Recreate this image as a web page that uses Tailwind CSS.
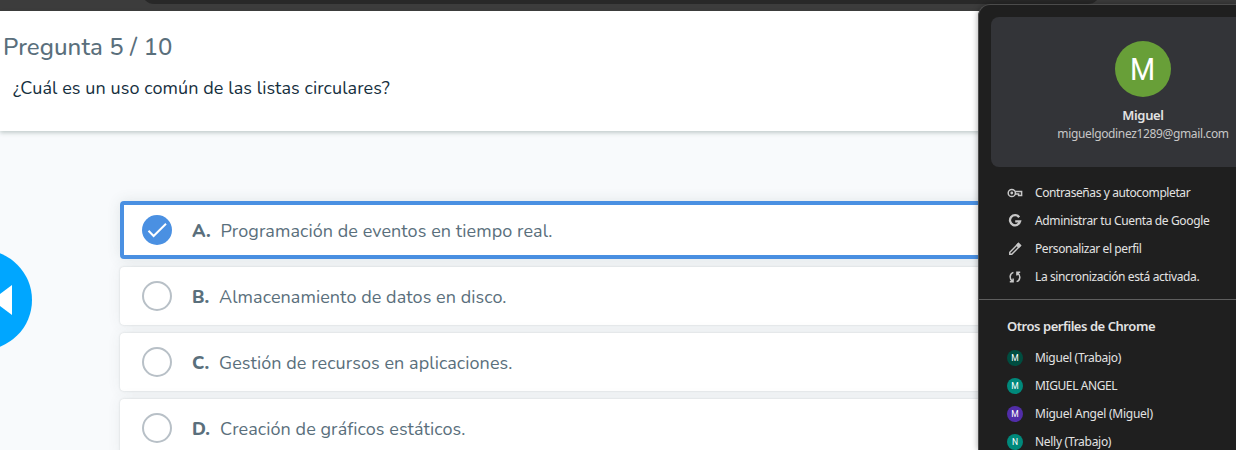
<!DOCTYPE html>
<html lang="es">
<head>
<meta charset="utf-8">
<title>Pregunta 5 / 10</title>
<script src="https://cdn.jsdelivr.net/npm/@tailwindcss/browser@4"></script>
</head>
<body class="relative flex h-[450px] w-[1236px] flex-col overflow-hidden bg-[#f8fafc] font-['Nunito',Lato,sans-serif] text-[#5a6f7c]">
  <div class="h-[11px] w-full shrink-0 overflow-hidden bg-[#3c3c3c] pl-[142px]">
    <div class="-mt-[20px] h-6 w-[958px] rounded-b-[12px] bg-[#282828]"></div>
  </div>
  <header class="relative z-10 h-[120px] shrink-0 bg-white shadow-[0_2px_4px_rgba(40,70,65,0.25)]">
    <h1 class="pt-[20px] pl-[3px] text-[24px] leading-[32px] font-medium whitespace-nowrap tracking-[0.08px]">Pregunta 5 / 10</h1>
    <p class="pt-[12px] pl-[13px] text-[18px] leading-[26px] whitespace-nowrap tracking-[0.08px] text-[#162f3e]">¿Cuál es un uso común de las listas circulares?</p>
  </header>
  <main class="flex flex-col gap-2 pt-[70px] pl-[120px]">
    <div class="flex h-[58px] shrink-0 items-center rounded-[4px] border-4 border-[#4a90e2] bg-white pl-[18px] text-[18px] whitespace-nowrap shadow-[0_0_14px_rgba(60,80,80,0.12)]">
      <svg class="size-[30px]" viewBox="0 0 30 30"><circle cx="15" cy="15" r="15" fill="#4a90e2"/><path d="M6.5 15.8 11.6 21 24 8.8" fill="none" stroke="#fff" stroke-width="2"/></svg>
      <b class="ml-5 w-[28.5px] pt-[2px] font-extrabold">A.</b><span class="pt-[2px] tracking-[0.07px]">Programación de eventos en tiempo real.</span>
    </div>
    <div class="flex h-[58px] shrink-0 items-center rounded-[4px] bg-white pl-[22px] text-[18px] whitespace-nowrap shadow-[0_0_2px_rgba(60,80,80,0.2),0_0_14px_rgba(60,80,80,0.08)]">
      <i class="size-[30px] rounded-full border-2 border-[#b8c0c7]"></i>
      <b class="ml-5 w-[27px] pt-[2px] font-extrabold">B.</b><span class="pt-[2px] tracking-[0.07px]">Almacenamiento de datos en disco.</span>
    </div>
    <div class="flex h-[58px] shrink-0 items-center rounded-[4px] bg-white pl-[22px] text-[18px] whitespace-nowrap shadow-[0_0_2px_rgba(60,80,80,0.2),0_0_14px_rgba(60,80,80,0.08)]">
      <i class="size-[30px] rounded-full border-2 border-[#b8c0c7]"></i>
      <b class="ml-5 w-[27px] pt-[2px] font-extrabold">C.</b><span class="pt-[2px] tracking-[0.07px]">Gestión de recursos en aplicaciones.</span>
    </div>
    <div class="flex h-[58px] shrink-0 items-center rounded-[4px] bg-white pl-[22px] text-[18px] whitespace-nowrap shadow-[0_0_2px_rgba(60,80,80,0.2),0_0_14px_rgba(60,80,80,0.08)]">
      <i class="size-[30px] rounded-full border-2 border-[#b8c0c7]"></i>
      <b class="ml-5 w-[28px] pt-[2px] font-extrabold">D.</b><span class="pt-[2px] tracking-[0.07px]">Creación de gráficos estáticos.</span>
    </div>
  </main>

  <svg class="absolute top-[250px] left-[-68px] size-[100px]" viewBox="0 0 100 100"><circle cx="50" cy="50" r="50" fill="#00a6ff"/><path d="M80 35v30L60 50z" fill="#fff"/></svg>

  <aside class="absolute top-[4px] left-[978px] z-20 h-[446px] w-[258px] overflow-hidden rounded-tl-[12px] border-t border-l border-[#4b4b4b] bg-[#1f1f1f] font-['Segoe_UI','Noto_Sans',sans-serif] text-[12px] whitespace-nowrap text-[#e3e3e3] shadow-[0_0_6px_rgba(0,0,0,0.35)]">
    <section class="mt-[12px] ml-[12px] flex h-[150px] w-[245px] flex-col items-center rounded-l-[8px] bg-[#333438] pt-6 pl-[59px]">
      <div class="flex size-14 items-center justify-center rounded-full bg-[#689f38] pt-[2px] font-[Roboto,sans-serif] text-[31px] text-white"><span class="scale-x-[0.93]">M</span></div>
      <b class="mt-[9px] text-[13px] leading-[18px] font-semibold tracking-[-0.35px]">Miguel</b>
      <span class="mt-px leading-[18px] tracking-[-0.36px] text-[#c7c7c7]">miguelgodinez1289@gmail.com</span>
    </section>
    <nav class="flex flex-col pt-[12px] pl-[28px]">
      <div class="flex h-7 items-center gap-3"><svg class="size-4" viewBox="0 0 16 16" fill="none" stroke="#c7c7c7" stroke-width="1.5"><circle cx="4.8" cy="8" r="3.6"/><circle cx="4.8" cy="8" r="1.4" fill="#c7c7c7" stroke="none"/><path d="M8 6.6h6.6v4h-3V8.9H8"/></svg><span class="tracking-[-0.4px]">Contraseñas y autocompletar</span></div>
      <div class="flex h-7 items-center gap-3"><svg class="size-4" viewBox="0 0 16 16" fill="none" stroke="#c7c7c7" stroke-width="2.3"><path d="M12.2 4.2A5.1 5.1 0 1 0 13.1 8.3H8.2"/></svg><span class="tracking-[-0.36px]">Administrar tu Cuenta de Google</span></div>
      <div class="flex h-7 items-center gap-3"><svg class="size-4" viewBox="0 0 16 16" fill="none" stroke="#c7c7c7" stroke-width="1.5"><path d="M2.8 13.2v-2l8.6-8.6 2 2-8.6 8.6z"/><path d="m9.8 4.2 2 2 1.6-1.6-2-2z" fill="#c7c7c7"/></svg><span class="tracking-[-0.4px]">Personalizar el perfil</span></div>
      <div class="flex h-7 items-center gap-3"><svg class="size-4" viewBox="0 0 16 16" fill="none" stroke="#c7c7c7" stroke-width="1.5"><path d="M6.4 3.4C2.4 4.8 2.2 9.8 5.4 12.2M2.8 12.7h3.3V9.4M9.6 12.6c4-1.4 4.2-6.4 1-8.8M13.2 3.3H9.9v3.3"/></svg><span class="tracking-[-0.38px]">La sincronización está activada.</span></div>
    </nav>
    <div class="mt-[8px] h-px bg-[#5e5e5e]"></div>
    <h2 class="mt-[16px] pl-[28px] text-[13px] leading-[20px] font-semibold tracking-[-0.45px]">Otros perfiles de Chrome</h2>
    <div class="flex flex-col pt-[8px] pl-[28px]">
      <div class="flex h-7 items-center gap-3"><i class="flex size-4 items-center justify-center rounded-full bg-[#004d40] pt-px font-[Roboto,sans-serif] text-[8.5px] text-white not-italic">M</i><span class="tracking-[-0.31px]">Miguel (Trabajo)</span></div>
      <div class="flex h-7 items-center gap-3"><i class="flex size-4 items-center justify-center rounded-full bg-[#00897b] pt-px font-[Roboto,sans-serif] text-[8.5px] text-white not-italic">M</i><span class="tracking-[-0.4px]">MIGUEL ANGEL</span></div>
      <div class="flex h-7 items-center gap-3"><i class="flex size-4 items-center justify-center rounded-full bg-[#512da8] pt-px font-[Roboto,sans-serif] text-[8.5px] text-white not-italic">M</i><span class="tracking-[-0.25px]">Miguel Angel (Miguel)</span></div>
      <div class="flex h-7 items-center gap-3"><i class="flex size-4 items-center justify-center rounded-full bg-[#00897b] pt-px font-[Roboto,sans-serif] text-[8.5px] text-white not-italic">N</i><span class="tracking-[-0.29px]">Nelly (Trabajo)</span></div>
    </div>
  </aside>
</body>
</html>
